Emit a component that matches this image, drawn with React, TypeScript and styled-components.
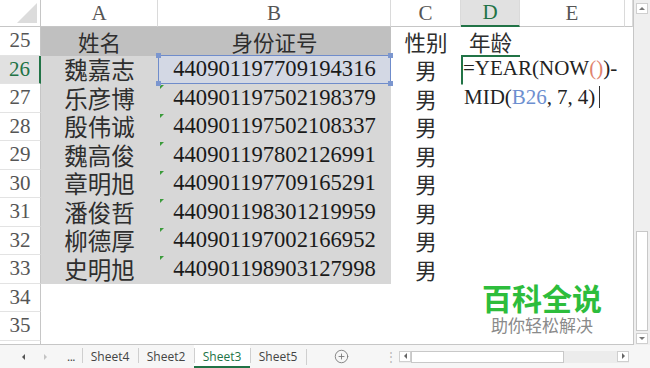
import React from "react";
import styled, { createGlobalStyle } from "styled-components";
import { CirclePlus } from "lucide-react";

const GREEN = "#217346";
const SERIF = '"Liberation Serif", "Times New Roman", Tinos, serif';
const CJK = '"Noto Sans CJK SC", "Noto Sans", sans-serif';

const GlobalStyle = createGlobalStyle`
  *, *::before, *::after { box-sizing: border-box; }
  html, body { margin: 0; padding: 0; background: #fff; overflow: hidden; }
  #root { width: 650px; height: 368px; }
`;

const Window = styled.div`
  width: 650px;
  height: 368px;
  display: flex;
  flex-direction: column;
  overflow: hidden;
  font-family: ${SERIF};
`;

const Main = styled.div`
  display: flex;
  height: 345px;
`;

const Sheet = styled.div`
  position: relative;
  width: 634px;
  height: 345px;
  border-right: 1px solid #c6c6c6;
  border-bottom: 1px solid #c6c6c6;
  overflow: hidden;
  display: grid;
  grid-template-columns: 41px 117px 233px 70px 59px 105px 8px;
  grid-template-rows: 27px repeat(12, 28.5px);
`;

const Corner = styled.div`
  position: relative;
  background: #fff;
  border-right: 1px solid #c6c6c6;
  border-bottom: 1px solid #c6c6c6;

  &::after {
    content: "";
    position: absolute;
    right: 3px;
    bottom: 3px;
    border-left: 20px solid transparent;
    border-bottom: 20px solid #dcdcdc;
  }
`;

const ColHead = styled.div<{ $active?: boolean }>`
  display: flex;
  align-items: center;
  justify-content: center;
  line-height: 1;
  background: ${p => (p.$active ? "#e1e1e1" : "#fff")};
  color: ${p => (p.$active ? GREEN : "#555")};
  border-right: 1px solid #dadada;
  border-bottom: ${p => (p.$active ? `2px solid ${GREEN}` : "1px solid #c6c6c6")};
  font-family: ${SERIF};
  font-size: 21px;
`;

const RowHead = styled.div<{ $active?: boolean }>`
  display: flex;
  align-items: center;
  justify-content: center;
  line-height: 1;
  background: ${p => (p.$active ? "#e1e1e1" : "#fff")};
  color: ${p => (p.$active ? GREEN : "#555")};
  border-right: ${p => (p.$active ? `2px solid ${GREEN}` : "1px solid #c6c6c6")};
  border-bottom: 1px solid #e3e3e3;
  font-family: ${SERIF};
  font-size: 21px;
`;

const Cell = styled.div<{ $fill?: string; $kind?: "name" | "head" | "id" | "cjk" }>`
  position: relative;
  display: flex;
  align-items: center;
  justify-content: center;
  white-space: nowrap;
  line-height: 1;
  background: ${p => p.$fill ?? "transparent"};
  color: ${p => (p.$kind === "id" ? "#1a1a1a" : "#2e2e2e")};
  font-family: ${p => (p.$kind === "id" ? SERIF : CJK)};
  font-size: ${p => (p.$kind === "id" ? "22.6px" : p.$kind === "name" ? "23.5px" : "21.5px")};
`;

const Flag = styled.span`
  position: absolute;
  top: 1px;
  left: 2px;
  border-top: 4px solid #3b9b3b;
  border-right: 4px solid transparent;
`;

const RefBox = styled.div`
  position: absolute;
  inset: -1px 0 0 0;
  border: 1px solid #6f8ccb;
  z-index: 2;
`;

const Handle = styled.span<{ $right?: boolean; $bottom?: boolean }>`
  position: absolute;
  width: 5px;
  height: 5px;
  background: #7b96cf;
  ${p => (p.$right ? "right: -3px;" : "left: -3px;")}
  ${p => (p.$bottom ? "bottom: -3px;" : "top: -3px;")}
`;

const Editor = styled.div`
  position: absolute;
  top: -1px;
  left: 0;
  width: 162px;
  height: 58px;
  z-index: 3;
  padding: 0 0 0 2px;
  background:
    linear-gradient(${GREEN}, ${GREEN}) 0 0 / 59px 2px no-repeat,
    linear-gradient(${GREEN}, ${GREEN}) 0 0 / 2px 29.5px no-repeat,
    #fff;
  font-family: ${SERIF};
  font-size: 21px;
  color: #222;
  white-space: nowrap;
`;

const EditLine = styled.div<{ $indent?: number }>`
  padding-left: ${p => p.$indent ?? 0}px;
  display: flex;
  align-items: center;
  height: 28.5px;
  line-height: 1;
`;

const Tok = styled.span<{ $color?: string; $gap?: number }>`
  color: ${p => p.$color ?? "inherit"};
  margin-right: ${p => p.$gap ?? 0}px;
`;

const Caret = styled.span`
  display: inline-block;
  width: 1px;
  height: 22px;
  margin-left: 4px;
  background: #333;
`;

const Watermark = styled.div`
  position: absolute;
  left: 482px;
  top: 279px;
  display: flex;
  flex-direction: column;
  align-items: center;
  z-index: 4;
  font-family: ${CJK};
`;

const MarkTitle = styled.div`
  font-size: 30px;
  font-weight: 700;
  line-height: 36px;
  color: #2dbd3c;
`;

const MarkSub = styled.div`
  font-size: 17px;
  line-height: 20px;
  color: #8a8a8a;
`;

const VScroll = styled.div`
  width: 16px;
  display: flex;
  flex-direction: column;
  background: #efefef;
  padding: 3px 2px 1px 2px;
`;

const ArrowBox = styled.div`
  width: 12px;
  height: 11px;
  display: flex;
  align-items: center;
  justify-content: center;
  background: #fff;
  border: 1px solid #cfcfcf;
  flex-shrink: 0;
`;

const Tri = styled.span<{ $dir: "up" | "down" | "left" | "right"; $color?: string; $size?: number }>`
  width: 0;
  height: 0;
  ${p => {
    const s = p.$size ?? 3;
    const c = p.$color ?? "#777";
    if (p.$dir === "up") return `border-left:${s}px solid transparent;border-right:${s}px solid transparent;border-bottom:${s}px solid ${c};`;
    if (p.$dir === "down") return `border-left:${s}px solid transparent;border-right:${s}px solid transparent;border-top:${s}px solid ${c};`;
    if (p.$dir === "left") return `border-top:${s}px solid transparent;border-bottom:${s}px solid transparent;border-right:${s}px solid ${c};`;
    return `border-top:${s}px solid transparent;border-bottom:${s}px solid transparent;border-left:${s}px solid ${c};`;
  }}
`;

const Track = styled.div<{ $horizontal?: boolean }>`
  flex: 1;
  display: flex;
  flex-direction: ${p => (p.$horizontal ? "row" : "column")};
  justify-content: ${p => (p.$horizontal ? "flex-start" : "flex-end")};
  padding: ${p => (p.$horizontal ? "0" : "2px 0")};
`;

const Thumb = styled.div<{ $horizontal?: boolean }>`
  background: #fff;
  border: 1px solid #c8c8c8;
  ${p => (p.$horizontal ? "width: 153px; height: 100%;" : "height: 100px; width: 12px;")}
`;

const TabBar = styled.div`
  height: 23px;
  display: flex;
  align-items: center;
  background: #f6f6f6;
  font-family: "Segoe UI", "Open Sans", "Noto Sans", sans-serif;
  font-size: 12px;
  color: #444;
`;

const Nav = styled.div`
  width: 82px;
  display: flex;
  align-items: center;
  padding-left: 22px;
  gap: 19px;
`;

const Dots = styled.span`
  font-size: 12px;
  letter-spacing: -0.5px;
  color: #444;
  margin-left: 1px;
`;

const Tab = styled.div<{ $active?: boolean }>`
  width: 56px;
  height: 23px;
  display: flex;
  align-items: center;
  justify-content: center;
  position: relative;
  color: ${p => (p.$active ? GREEN : "#444")};
  background: ${p => (p.$active ? "#fff" : "transparent")};
  border-bottom: 2px solid ${p => (p.$active ? GREEN : "transparent")};
  padding-top: 1px;

  &::before {
    content: "";
    position: absolute;
    left: 0;
    top: 3px;
    bottom: 3px;
    border-left: 1px solid #cfcfcf;
  }
`;

const TabEnd = styled.span`
  width: 1px;
  height: 16px;
  background: #cfcfcf;
`;

const AddButton = styled.div`
  margin-left: 27px;
  display: flex;
  align-items: center;
  color: #777;
`;

const Splitter = styled.span`
  margin-left: 36px;
  color: #b8b8b8;
  font-size: 12px;
  width: 14px;
`;

const HScroll = styled.div`
  width: 230px;
  height: 12px;
  display: flex;
  background: #ececec;
`;

const people: [string, string][] = [
  ["魏嘉志", "440901197709194316"],
  ["乐彦博", "440901197502198379"],
  ["殷伟诚", "440901197502108337"],
  ["魏高俊", "440901197802126991"],
  ["章明旭", "440901197709165291"],
  ["潘俊哲", "440901198301219959"],
  ["柳德厚", "440901197002166952"],
  ["史明旭", "440901198903127998"],
];

const HEAD_FILL = "#c0c0c0";
const BODY_FILL = "#d7d7d7";

export default function App() {
  return (
    <Window>
      <GlobalStyle />
      <Main>
        <Sheet>
          <Corner />
          <ColHead>A</ColHead>
          <ColHead>B</ColHead>
          <ColHead>C</ColHead>
          <ColHead $active>D</ColHead>
          <ColHead>E</ColHead>
          <ColHead />

          <RowHead>25</RowHead>
          <Cell $fill={HEAD_FILL} $kind="head">姓名</Cell>
          <Cell $fill={HEAD_FILL} $kind="head">身份证号</Cell>
          <Cell $kind="head">性别</Cell>
          <Cell $kind="head">年龄</Cell>
          <Cell />
          <Cell />

          {people.map(([name, id], i) => {
            const row = 26 + i;
            const first = i === 0;
            return (
              <React.Fragment key={row}>
                <RowHead $active={first}>{row}</RowHead>
                <Cell $fill={BODY_FILL} $kind="name">{name}</Cell>
                <Cell $fill={first ? "#d3d8e4" : BODY_FILL} $kind="id">
                  {!first && <Flag />}
                  {id}
                  {first && (
                    <RefBox>
                      <Handle />
                      <Handle $right />
                      <Handle $bottom />
                      <Handle $right $bottom />
                    </RefBox>
                  )}
                </Cell>
                <Cell $kind="cjk">男</Cell>
                <Cell>
                  {first && (
                    <Editor>
                      <EditLine>
                        =YEAR(NOW<Tok $color="#e0836e">()</Tok>)<Tok $gap={0}>-</Tok>
                      </EditLine>
                      <EditLine $indent={1}>
                        MID(<Tok $color="#6d8fd0">B26</Tok>
                        <Tok $gap={5}>,</Tok>7<Tok $gap={5}>,</Tok>4)
                        <Caret />
                      </EditLine>
                    </Editor>
                  )}
                </Cell>
                <Cell />
                <Cell />
              </React.Fragment>
            );
          })}

          {[34, 35, 36].map(row => (
            <React.Fragment key={row}>
              <RowHead>{row}</RowHead>
              <Cell />
              <Cell />
              <Cell />
              <Cell />
              <Cell />
              <Cell />
            </React.Fragment>
          ))}

          <Watermark>
            <MarkTitle>百科全说</MarkTitle>
            <MarkSub>助你轻松解决</MarkSub>
          </Watermark>
        </Sheet>

        <VScroll>
          <ArrowBox>
            <Tri $dir="up" />
          </ArrowBox>
          <Track>
            <Thumb />
          </Track>
          <ArrowBox>
            <Tri $dir="down" />
          </ArrowBox>
        </VScroll>
      </Main>

      <TabBar>
        <Nav>
          <Tri $dir="left" $color="#555" />
          <Tri $dir="right" $color="#c4c4c4" />
          <Dots>...</Dots>
        </Nav>
        <Tab>Sheet4</Tab>
        <Tab>Sheet2</Tab>
        <Tab $active>Sheet3</Tab>
        <Tab>Sheet5</Tab>
        <TabEnd />
        <AddButton>
          <CirclePlus size={15} strokeWidth={1.4} />
        </AddButton>
        <Splitter>⋮</Splitter>
        <HScroll>
          <ArrowBox>
            <Tri $dir="left" $color="#666" />
          </ArrowBox>
          <Track $horizontal>
            <Thumb $horizontal />
          </Track>
          <ArrowBox>
            <Tri $dir="right" $color="#666" />
          </ArrowBox>
        </HScroll>
      </TabBar>
    </Window>
  );
}
